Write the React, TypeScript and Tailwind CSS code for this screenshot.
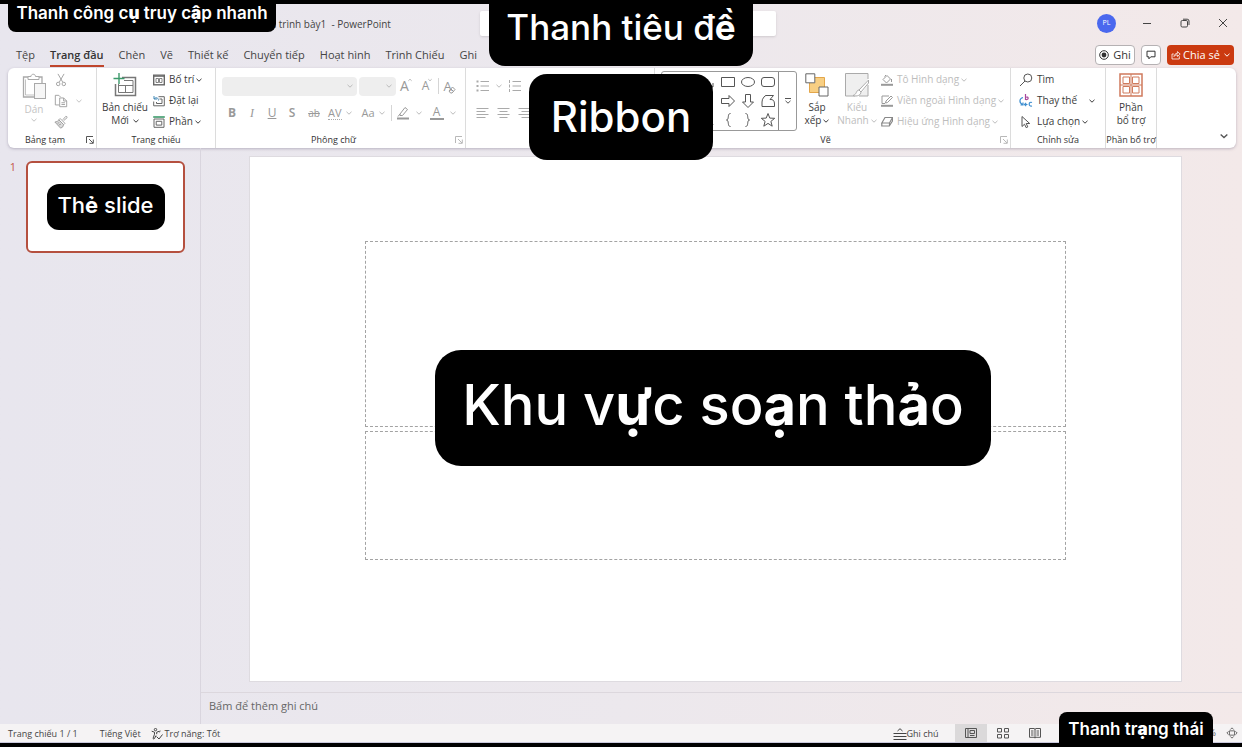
import type { ReactNode } from "react";

type IconProps = { className?: string; box?: string; children: ReactNode };

function Icon({ className = "size-4", box = "0 0 16 16", children }: IconProps) {
  return (
    <svg viewBox={box} className={`shrink-0 ${className}`} fill="none" stroke="currentColor" strokeWidth="1" aria-hidden="true">
      {children}
    </svg>
  );
}

function Chevron({ className = "size-1.5" }: { className?: string }) {
  return (
    <Icon className={className} box="0 0 6 6">
      <path d="M.5 1.8 3 4.2l2.5-2.4" />
    </Icon>
  );
}

function Launcher() {
  return (
    <Icon className="size-2" box="0 0 8 8">
      <path d="M.5 7V.5H7M3 3l4 4M7.3 3.5v3.8H3.5" />
    </Icon>
  );
}

type GroupProps = { label: string; width: string; launcher?: "dark" | "light"; children: ReactNode };

function Group({ label, width, launcher, children }: GroupProps) {
  return (
    <section className={`flex flex-col border-r border-[#dcdcdc] ${width}`} aria-label={label}>
      <div className="flex h-16 pt-px">{children}</div>
      <div className={`relative flex h-4 items-center justify-center text-[9px] leading-4 text-[#333] ${launcher ? "pr-3.5" : ""}`}>
        {label && <span className="whitespace-nowrap">{label}</span>}
        {launcher && (
          <button
            aria-label={`Tùy chọn ${label}`}
            className={`absolute right-0.5 top-1 ${launcher === "dark" ? "text-[#555]" : "text-[#b8b8b8]"}`}
          >
            <Launcher />
          </button>
        )}
      </div>
    </section>
  );
}

function RowButton({ icon, text, chevron, muted, spread }: { icon: ReactNode; text: string; chevron?: boolean; muted?: boolean; spread?: boolean }) {
  return (
    <button className={`flex h-[21px] items-center gap-1 whitespace-nowrap text-[10px] ${muted ? "text-[#bdbdbd]" : "text-[#3b3b3b]"}`}>
      {icon}
      <span>{text}</span>
      {chevron && <Chevron className={spread ? "ml-2 size-1.5" : "-ml-0.5 size-1.5"} />}
    </button>
  );
}

function Callout({ className, children }: { className: string; children: ReactNode }) {
  return (
    <div className={`absolute flex items-center justify-center whitespace-nowrap bg-black font-['Inter','Noto_Sans',sans-serif] text-white ${className}`}>
      <span>{children}</span>
    </div>
  );
}

const tabs = ["Tệp", "Trang đầu", "Chèn", "Vẽ", "Thiết kế", "Chuyển tiếp", "Hoạt hình", "Trình Chiếu", "Ghi"];

function TitleBar() {
  return (
    <header className="relative flex h-[38px] items-center justify-end">
      <h1 className="absolute left-[258px] top-3 text-[10px] leading-4 whitespace-pre text-[#444]">Bản trình bày1  - PowerPoint</h1>
      <input aria-label="Tìm kiếm" className="absolute left-[480px] top-[7px] h-[25px] w-[296px] rounded-xs bg-white shadow-sm" />
      <div className="flex items-center pr-3 text-[#444]">
        <button className="mr-[26px] size-[19px] rounded-full bg-[#4a68ee] text-[7px] text-white">PL</button>
        <button aria-label="Thu nhỏ" className="mr-7">
          <Icon className="size-2.5" box="0 0 10 10"><path d="M1 5.5h8" /></Icon>
        </button>
        <button aria-label="Khôi phục" className="mr-7">
          <Icon className="size-2.5" box="0 0 10 10">
            <rect x="1" y="2.5" width="6.5" height="6.5" rx="1.3" />
            <path d="M3 1.2h4.2a1.8 1.8 0 0 1 1.8 1.8v4" />
          </Icon>
        </button>
        <button aria-label="Đóng" className="mr-0.5">
          <Icon className="size-2.5" box="0 0 10 10"><path d="m1 1 8 8M9 1 1 9" /></Icon>
        </button>
      </div>
    </header>
  );
}

function TabRow() {
  return (
    <div className="flex h-[26px] items-center justify-between pl-4 pr-2">
      <nav className="flex gap-[15px] text-[11px] text-[#444]">
        {tabs.map((tab, i) => (
          <button
            key={tab}
            className={`whitespace-nowrap border-b-2 pt-0.5 leading-5 ${i === 1 ? "border-[#c0452c] font-semibold text-[#333]" : "border-transparent"}`}
          >
            {tab}
          </button>
        ))}
      </nav>
      <div className="flex items-center gap-1.5 text-[11px] text-[#333]">
        <button className="flex h-5 w-10 items-center justify-center gap-1 rounded-sm border border-[#b5b1b3] bg-white">
          <Icon className="size-2.5" box="0 0 10 10">
            <circle cx="5" cy="5" r="4.3" />
            <circle cx="5" cy="5" r="2.4" fill="currentColor" stroke="none" />
          </Icon>
          Ghi
        </button>
        <button aria-label="Chú thích" className="flex h-5 w-5 items-center justify-center rounded-sm border border-[#b5b1b3] bg-white">
          <Icon className="size-2.5" box="0 0 10 10"><path d="M1 1.2h8v5.6H4.8L2.9 8.800v-2H1z" /></Icon>
        </button>
        <button className="flex h-5 w-[67px] items-center justify-center gap-0.5 rounded-sm bg-[#cb3a10] whitespace-nowrap text-white">
          <Icon className="size-2.5" box="0 0 10 10">
            <path d="M2.800 4H1v5h7.300V6.200M3 6.500c.3-2 1.400-3 3.400-3.100V1.600L9.200 4.100 6.400 6.500V4.900C4.800 4.900 3.800 5.400 3 6.500z" strokeWidth=".8" />
          </Icon>
          <span>Chia sẻ</span>
          <Chevron className="ml-0.5 size-1.5" />
        </button>
      </div>
    </div>
  );
}

function ClipboardGroup() {
  return (
    <Group label="Bảng tạm" width="w-[89px]" launcher="dark">
      <button className="ml-3.5 flex w-6 flex-col items-center text-[10px] leading-4 text-[#c4c4c4]">
        <Icon className="mt-1 size-7 text-[#a9a9a9]" box="0 0 28 28">
          <path d="M8 4H3.500v20H14M19 4h3v7" strokeWidth="1.300" />
          <path d="M5.500 6.500v15.500H14" strokeWidth=".7" />
          <path d="M8 6.500V3.500h3c0-3 4.500-3 4.500 0h3.500v3z" fill="#fff" />
          <rect x="14.500" y="10.500" width="11" height="15" fill="#f6f6f6" />
        </Icon>
        <span>Dán</span>
        <Chevron />
      </button>
      <div className="ml-2 flex flex-col text-[#999]">
        <button aria-label="Cắt" className="flex h-[21px] items-center">
          <Icon className="size-3.5">
            <path d="m4.500 1 5.500 9.500M11.500 1 6 10.500" />
            <circle cx="4.800" cy="12.500" r="2" /><circle cx="11.200" cy="12.500" r="2" />
          </Icon>
        </button>
        <button aria-label="Sao chép" className="flex h-[21px] items-center gap-2 text-[#999]">
          <Icon className="size-3.5">
            <path d="M6 12.500H1.500v-11h4l2 2M6.500 4.500h4.500l3.500 3.500v6.500h-8zM11 4.500v3.500h3.500M8.500 10h4M8.500 12h4" />
          </Icon>
          <Chevron className="size-1.5 text-[#c4c4c4]" />
        </button>
        <button aria-label="Sao chép định dạng" className="flex h-[21px] items-center">
          <Icon className="size-3.5">
            <path d="m10 5.500 3.500-4q1.500 0 1.500 1.500l-4 3.500M7 4l5.500 5.500-1.500 1.500L5.500 5.500z" />
            <path d="M5.500 5.500Q4.500 8 1 8l6.500 7q3-.5 3.500-4z" fill="#dcdcdc" />
            <path d="m4 9.500 2-.8M5.500 11.500l2.500-1.200" />
          </Icon>
        </button>
      </div>
    </Group>
  );
}

function SlidesGroup() {
  return (
    <Group label="Trang chiếu" width="w-[119px]">
      <button className="ml-1 flex w-12 flex-col items-center whitespace-nowrap text-[10px] leading-[13px] text-[#3b3b3b]">
        <Icon className="mt-1 mb-1 size-6 text-[#777]" box="0 0 24 24">
          <path d="M9 4.500h13.500v18h-20V11" strokeWidth="1.500" />
          <path d="M11 7.500h9v12H5.500V11M5.500 12.500H20M12.500 12.500v7" />
          <path d="M6 0v11M.5 5.500h11" stroke="#3c9a6b" strokeWidth="1.400" />
        </Icon>
        <span>Bản chiếu</span>
        <span className="flex items-center gap-1">Mới <Chevron /></span>
      </button>
      <div className="ml-1 flex flex-col">
        <RowButton
          text="Bố trí"
          chevron
          icon={
            <Icon className="h-3.5 w-3 text-[#666]" box="0 0 12 12">
              <rect x=".7" y="1.200" width="10.600" height="9.600" strokeWidth="1.400" /><path d="M3 4.500h2.500v4H3zM6.500 4.500H9v4H6.500zM1 2.500h10" strokeWidth=".8" />
            </Icon>
          }
        />
        <RowButton
          text="Đặt lại"
          icon={
            <Icon className="h-3.5 w-3 text-[#666]" box="0 0 12 12">
              <path d="M5.500 1.700h5.800v9.100H.7V6.500M6.500 4H9v4.500H3.500V7" /><path d="M1 1v3h3M1.200 3.800c2-2 4.300-1 4.300 1.700" stroke="#3f86b5" />
            </Icon>
          }
        />
        <RowButton
          text="Phần"
          chevron
          icon={
            <Icon className="h-3.5 w-3 text-[#666]" box="0 0 12 12">
              <path d="M.2 1h11.600" stroke="#3c9a6b" strokeWidth="1.600" /><path d="M1 3v8.300h10V3zM3.200 5.300h5.600v3.800H3.200z" />
            </Icon>
          }
        />
      </div>
    </Group>
  );
}

function FontGroup() {
  return (
    <Group label="Phông chữ" width="w-[250px]" launcher="light">
      <div className="flex flex-col pl-1.5 text-[#999]">
        <div className="flex h-[34px] items-center">
          <button aria-label="Phông" className="flex h-[19px] w-[135px] items-center justify-end rounded-sm bg-[#eee] pr-1 text-[#bbb]"><Chevron /></button>
          <button aria-label="Cỡ chữ" className="ml-0.5 flex h-[19px] w-[37px] items-center justify-end rounded-sm bg-[#eee] pr-1 text-[#bbb]"><Chevron /></button>
          <button aria-label="Tăng cỡ chữ" className="ml-1 flex text-[14px] leading-4">A<Chevron className="-ml-px size-1 rotate-180" /></button>
          <button aria-label="Giảm cỡ chữ" className="ml-2.5 flex text-[12px] leading-4">A<Chevron className="-ml-px size-1" /></button>
          <span className="ml-1.5 h-4 w-px bg-[#d5d5d5]" />
          <button aria-label="Xóa định dạng" className="ml-1 flex items-end text-[13px] leading-4">
            A<Icon className="-ml-1 size-2" box="0 0 8 8"><path d="m1 5 3.500-4L7 3.500 4 7H2.500zM3 3l2.500 2.500" /></Icon>
          </button>
        </div>
        <div className="flex h-5 items-center text-[12px] leading-4">
          <button className="w-5 font-bold">B</button>
          <button className="w-5 font-['Liberation_Serif',serif] italic">I</button>
          <button className="w-5 underline">U</button>
          <button className="w-5 font-semibold">S</button>
          <button className="w-6 text-[10px] line-through">ab</button>
          <button className="ml-0.5 flex items-center justify-center gap-1">
            <span className="border-b border-dotted border-[#aaa] text-[11px] leading-3">AV</span><Chevron className="size-1.5 text-[#bbb]" />
          </button>
          <button className="ml-2.5 flex items-center gap-1 text-[11px]">Aa<Chevron className="size-1.5 text-[#bbb]" /></button>
          <span className="ml-1.5 h-4 w-px bg-[#d5d5d5]" />
          <button aria-label="Màu tô sáng" className="ml-1 flex items-center gap-1.5">
            <Icon className="size-3.5" box="0 0 14 14"><path d="M1 12.500h12" strokeWidth="2" /><path d="m4 8 5-6.500 2.500 2L6.500 9.500H4zM2 10.500l2-2.500" /></Icon>
            <Chevron className="size-1.5 text-[#bbb]" />
          </button>
          <button className="ml-2 flex items-center gap-1.5">
            <span className="w-3.5 border-b-2 border-[#999] text-center leading-3">A</span><Chevron className="size-1.5 text-[#bbb]" />
          </button>
        </div>
      </div>
    </Group>
  );
}

function ParagraphGroup() {
  return (
    <Group label="" width="min-w-0 flex-1">
      <div className="flex flex-col pl-2.5 text-[#aaa]">
        <div className="flex h-[34px] items-center gap-1.5">
          <Icon className="size-3.5" box="0 0 14 14"><path d="M4.500 2.500H13M4.500 7H13M4.500 11.500H13" /><path d="M.5 2.500h2M.5 7h2M.5 11.500h2" strokeWidth="2" /></Icon>
          <Chevron className="size-1.5 text-[#bbb]" />
          <Icon className="size-3.5" box="0 0 14 14"><path d="M4.500 2.500H13M4.500 7H13M4.500 11.500H13M1.500 1v3M1.500 5.500v3M1.500 10v3" /></Icon>
        </div>
        <div className="flex h-5 items-center gap-2">
          <Icon className="size-[13px]" box="0 0 13 13"><path d="M.5 1.500h12M.5 4.500h9M.5 7.500h12M.5 10.500h9" /></Icon>
          <Icon className="size-[13px]" box="0 0 13 13"><path d="M.5 1.500h12M2.500 4.500h8M.5 7.500h12M2.500 10.500h8" /></Icon>
          <Icon className="size-[13px]" box="0 0 13 13"><path d="M.5 1.500h12M3.500 4.500h9M.5 7.500h12M3.500 10.500h9" /></Icon>
        </div>
      </div>
    </Group>
  );
}

const shapes = [
  "M2 4l11 9M13 9v4H9",
  "M1.500 3.500h13v9h-13z",
  "M1.500 8a6.500 4.500 0 1 0 13 0a6.500 4.500 0 1 0-13 0",
  "M4 3.500h8q2.500 0 2.500 2.500v4q0 2.500-2.500 2.500H4q-2.500 0-2.500-2.500V6q0-2.500 2.500-2.500",
  "M2 4v8h11M10 9l3 3-3 3",
  "M1.500 5.500H9v-3L14.500 8 9 13.500v-3H1.500z",
  "M5.500 1.500h5V9h3L8 14.500 2.500 9h3z",
  "M6 2.500h7.500l-3.500 4q4.500-.5 4.500 4.500v2.500H2V9q0-3 2-5 1-1.500 2-1.500z",
  "M2 3q9 1 11 10",
  "M10.500 1.500C7 1.500 9.500 7.500 6.500 8c3 .5.500 6.500 4 6.500",
  "M5.500 1.500C9 1.500 6.500 7.500 9.500 8c-3 .5-.5 6.500-4 6.500",
  "m8 1.500 1.800 4.600 4.900.2-3.800 3.100 1.300 4.800L8 11.400l-4.200 2.800 1.300-4.800-3.800-3.100 4.900-.2z",
];

function DrawingGroup() {
  return (
    <Group label="Vẽ" width="w-[356px]" launcher="light">
      <div className="mt-0.5 ml-1.5 flex h-[60px] w-[136px] rounded-[3px] border border-[#999] text-[#555]">
        <div className="ml-auto grid grid-cols-4 grid-rows-3 gap-x-1">
          {shapes.map((d) => (
            <button key={d} aria-label="Hình dạng" className="flex items-center justify-center">
              <Icon><path d={d} /></Icon>
            </button>
          ))}
        </div>
        <button aria-label="Thêm hình dạng" className="ml-0.5 flex w-[18px] items-center justify-center border-l border-[#888]">
          <Icon className="size-1.5" box="0 0 6 6"><path d="M0 .5h6M.5 2.800 3 5.200l2.500-2.400" /></Icon>
        </button>
      </div>
      <button className="flex w-10 flex-col items-center text-[10px] leading-[13px] text-[#3b3b3b]">
        <Icon className="mt-1 mb-1 size-6 text-[#666]" box="0 0 24 24">
          <path d="M9 4.500h10.500V15M4.500 10v9.500H14" fill="#f6d08a" stroke="#e3a64a" />
          <path d="M5 10h5V5h9v9h-5v5H5z" fill="#f8cf83" stroke="none" />
          <path d="M.8.800h9v9h-9zM14 14h9v9h-9z" fill="#fff" />
        </Icon>
        <span>Sắp</span>
        <span className="flex items-center gap-0.5">xếp <Chevron /></span>
      </button>
      <button className="flex w-10 flex-col items-center whitespace-nowrap text-[10px] leading-[13px] text-[#bdbdbd]">
        <Icon className="mt-1 mb-1 size-6 text-[#aaa]" box="0 0 24 24">
          <path d="M23 12v11H14M10 23H.500V.500h22.500V6" fill="#efefef" />
          <path d="M23.500 7 14 17l2 2 7.500-9zM14 17c-3 0-2 4.500-6 5.500 4 1.500 8-.5 8-3.500" fill="#fff" />
        </Icon>
        <span>Kiểu</span>
        <span className="flex items-center gap-0.5">Nhanh <Chevron /></span>
      </button>
      <div className="ml-1 flex flex-col">
        <RowButton
          muted
          chevron
          text="Tô Hình dạng"
          icon={<Icon className="size-3 text-[#999]" box="0 0 12 12"><path d="M0 10.800h12" strokeWidth="2" /><path d="m2 5.500 4-4 3.500 3.500-4 4zM3.500 2.500 5 1M10.500 5v3" /></Icon>}
        />
        <RowButton
          muted
          chevron
          text="Viền ngoài Hình dạng"
          icon={<Icon className="size-3 text-[#999]" box="0 0 12 12"><path d="M0 10.800h12" strokeWidth="2" /><path d="M8 1H1v7.500h3M4.500 8l.5-2 5-5 1.500 1.500-5 5z" /></Icon>}
        />
        <RowButton
          muted
          chevron
          text="Hiệu ứng Hình dạng"
          icon={<Icon className="size-3 text-[#888]" box="0 0 12 12"><path d="M4 1.500h7.500l-3 5.500H.800zM.800 7v3h7.500l3.200-5V1.500M8.500 7v3" strokeWidth="1.200" /></Icon>}
        />
      </div>
    </Group>
  );
}

function EditingGroup() {
  return (
    <Group label="Chỉnh sửa" width="w-[95px]">
      <div className="ml-2 flex flex-col">
        <RowButton
          text="Tìm"
          icon={<Icon className="size-3.5 text-[#555]" box="0 0 14 14"><circle cx="8.800" cy="5" r="4" /><path d="M6 8 1 13" /></Icon>}
        />
        <RowButton
          text="Thay thế"
          chevron
          spread
          icon={
            <Icon className="size-3.5" box="0 0 14 14">
              <path d="M6.500 0v6M6.500 3.500c3.500-2 3.500 3 0 2" stroke="#a8479c" strokeWidth="1.200" />
              <path d="M4 3.500C0 4.500 0 9 3.500 10.500M1.500 11h2.500V8.500" stroke="#3f8fd0" strokeWidth="1.200" />
              <path d="M13 8.500c-3.500-1.500-4 4.500 0 3.500M5.500 10.500h3M7.200 8.800 5.500 10.500l1.700 1.700" stroke="#3f8fd0" strokeWidth="1.200" />
            </Icon>
          }
        />
        <RowButton
          text="Lựa chọn"
          chevron
          icon={<Icon className="size-3.5 text-[#555]" box="0 0 14 14"><path d="M3 1.500v10l2.500-2.300 1.700 3.500 1.600-.8L7.200 8.500h3.500z" /></Icon>}
        />
      </div>
    </Group>
  );
}

function Ribbon() {
  return (
    <div className="mr-1.5 ml-2 flex h-20 rounded-md bg-white shadow-[0_1px_3px_rgba(90,80,110,0.35)]">
      <ClipboardGroup />
      <SlidesGroup />
      <FontGroup />
      <ParagraphGroup />
      <DrawingGroup />
      <EditingGroup />
      <Group label="Phần bổ trợ" width="w-[51px]">
        <button className="flex w-full flex-col items-center text-[10px] leading-[13px] text-[#3b3b3b]">
          <Icon className="mt-1 mb-1 size-6 text-[#cf7a5c]" box="0 0 24 24">
            <rect x="1" y="1" width="22" height="22" strokeWidth="1.500" />
            <path d="M4 4h6.500v6.500H4zM13.500 4H20v6.500h-6.500zM4 13.500h6.500V20H4zM13.500 13.500H20V20h-6.500zM12 1v22M1 12h22" />
          </Icon>
          <span>Phần</span>
          <span>bổ trợ</span>
        </button>
      </Group>
      <div className="flex w-[79px] items-end justify-end pr-2 pb-2 text-[#555]">
        <button aria-label="Thu gọn dải băng"><Chevron className="size-2" /></button>
      </div>
    </div>
  );
}

function Workspace() {
  return (
    <div className="flex min-h-0 flex-1">
      <aside className="flex w-[201px] items-start border-r border-[#d9d5de] pt-[13px]">
        <span className="w-[26px] text-center text-[11px] leading-3 text-[#c4574b]">1</span>
        <button aria-label="Trang chiếu 1" className="flex h-[92px] w-[159px] items-center justify-center rounded-md border-2 border-[#b5503f] bg-white">
          <span className="flex h-[46px] w-[118px] items-center justify-center rounded-xl bg-black pb-1 font-['Inter','Noto_Sans',sans-serif] text-[22px] font-medium whitespace-pre text-white">
            Th<b>ẻ</b> slide
          </span>
        </button>
      </aside>
      <main className="flex flex-1 flex-col">
        <div className="flex flex-1 flex-col pt-2 pr-[60px] pb-2.5 pl-12">
          <div className="flex flex-1 flex-col gap-1 border border-[#dedbe0] bg-white px-[115px] pt-[84px] pb-[121px]">
            <div role="textbox" aria-label="Tiêu đề" className="flex-[186] border border-dashed border-[#a3a3a3]" />
            <div role="textbox" aria-label="Phụ đề" className="flex-[129] border border-dashed border-[#a3a3a3]" />
          </div>
        </div>
        <div className="flex h-8 items-center border-t border-[#dcd7dd] px-2 pb-1 text-[11px] text-[#666]">Bấm để thêm ghi chú</div>
      </main>
    </div>
  );
}

function StatusBar() {
  return (
    <footer className="flex h-[19px] items-center justify-between border-b border-[#c9c8dc] bg-[#f5f3f4] pr-1 pl-2 text-[9px] text-[#444]">
      <div className="flex items-center pt-0.5">
        <span>Trang chiếu 1 / 1</span>
        <span className="ml-[22px]">Tiếng Việt</span>
        <button className="ml-2.5 flex items-center gap-0.5">
          <Icon className="size-3" box="0 0 12 12">
            <circle cx="4.500" cy="1.600" r="1.200" />
            <path d="M.7 3.200 3.500 4.200v2L2 10.500q1 1 1.500 0L5 7.500M8.500 3.200 5.700 4.200v2M9.500 3q-1 1-1.500 1M5.500 8.500 8 11l3.500-4.500" />
          </Icon>
          <span>Trợ năng: Tốt</span>
        </button>
      </div>
      <div className="flex h-full items-center text-[#555]">
        <button className="mr-4 flex items-center pt-0.5 text-[#444]">
          <Icon className="h-3 w-3.5" box="0 0 14 12"><path d="M4.500 3 7 .700l2.500 2.300M.500 5.500h13M.500 8.500h13M.500 11.500h13" /></Icon>
          <span>Ghi chú</span>
        </button>
        <button aria-label="Bình thường" className="flex h-full w-8 items-center justify-center bg-[#dbd9da]">
          <Icon className="size-3" box="0 0 12 12"><path d="M.500 1.500h11v9H.500zM3 1.500v9M5 3.500h4.500v3H5zM5 8.500h4.500" /></Icon>
        </button>
        <button aria-label="Bộ sắp xếp" className="ml-2.5">
          <Icon className="size-3" box="0 0 12 12"><path d="M.500 1.500h4v3.500h-4zM7.500 1.500h4v3.500h-4zM.500 7.500h4V11h-4zM7.500 7.500h4V11h-4z" /></Icon>
        </button>
        <button aria-label="Dạng xem đọc" className="ml-5">
          <Icon className="size-3" box="0 0 12 12"><path d="M.500 1.500H5l1 .7 1-.7h4.500v8.800H7l-1 .7-1-.7H.500zM6 2v9M2 4h2.500M2 6h2.500M2 8h2.500M7.500 4H10M7.500 6H10M7.500 8H10" /></Icon>
        </button>
        <span className="ml-[168px] mr-2.5">%</span>
        <button aria-label="Vừa với cửa sổ">
          <Icon className="size-3" box="0 0 14 14"><path d="M4 4.500h6v5H4zM5 3l2-2 2 2M5 11l2 2 2-2M3 5 1 7l2 2M11 5l2 2-2 2" /></Icon>
        </button>
      </div>
    </footer>
  );
}

export default function App() {
  return (
    <div className="relative flex min-h-screen flex-col border-y-4 border-black bg-linear-to-r from-[#e8e6ee] via-[#ece8ed] to-[#f3e9e9] font-['Open_Sans','Noto_Sans',sans-serif]">
      <TitleBar />
      <TabRow />
      <Ribbon />
      <Workspace />
      <StatusBar />
      <Callout className="-top-1 left-2 h-8 w-[268px] rounded-b-lg pb-1 text-[17px] font-semibold">
        Thanh công c<b>ụ</b> truy c<b>ậ</b>p nhanh
      </Callout>
      <Callout className="-top-1 left-[489px] h-[66px] w-[264px] rounded-b-2xl pb-3 text-[35px] font-medium">
        Thanh tiêu đ<b>ề</b>
      </Callout>
      <Callout className="top-[70px] left-[529px] h-[86px] w-[184px] rounded-[18px] pb-0.5 text-[42px] font-medium">Ribbon</Callout>
      <Callout className="top-[346px] left-[435px] h-[116px] w-[556px] rounded-[26px] pb-1.5 text-[56px] font-medium">
        Khu v<b>ự</b>c so<b>ạ</b>n th<b>ả</b>o
      </Callout>
      <Callout className="-bottom-1 right-[29px] h-[35px] w-[154px] rounded-t-lg text-[17px] font-semibold">
        Thanh tr<b>ạ</b>ng thái
      </Callout>
    </div>
  );
}
